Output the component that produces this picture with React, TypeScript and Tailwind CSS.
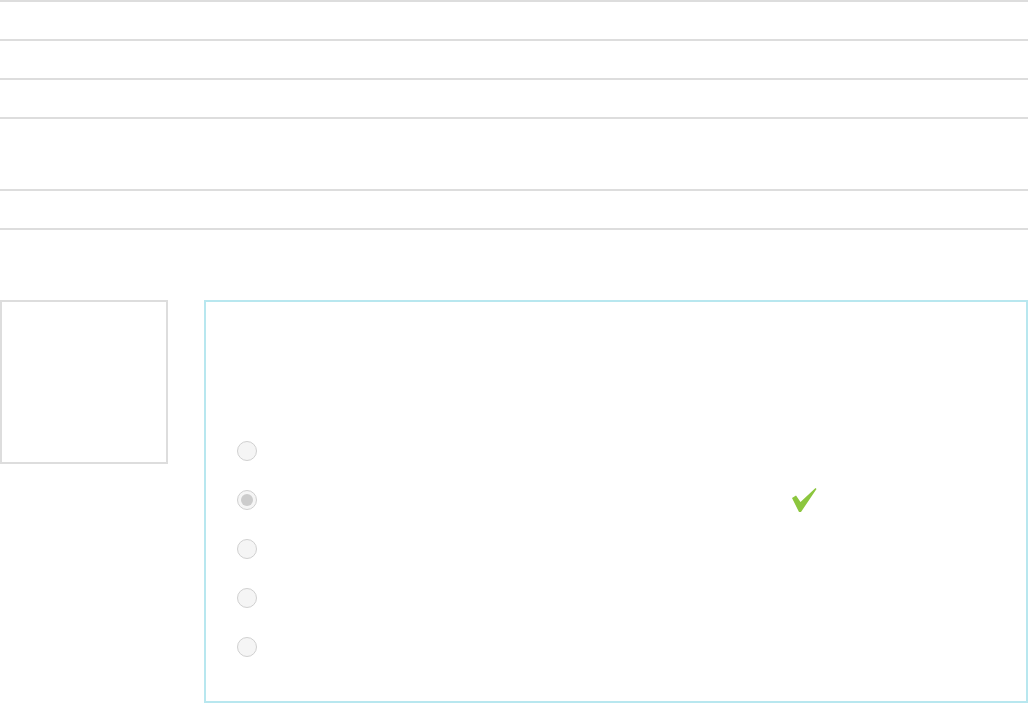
import React from 'react'

// heights include the 2px bottom border
const rows = [39, 39, 39, 72, 39]

const options = [
  { id: 1, checked: false, correct: false },
  { id: 2, checked: true, correct: true },
  { id: 3, checked: false, correct: false },
  { id: 4, checked: false, correct: false },
  { id: 5, checked: false, correct: false },
]

const Radio = ({ checked }: { checked: boolean }) => (
  <span className="flex items-center justify-center w-[20px] h-[20px] rounded-full border-[1.5px] border-[#d0d0d0] bg-[#f5f5f5] shrink-0">
    {checked && <span className="w-[12px] h-[12px] rounded-full bg-[#cccccc]" />}
  </span>
)

const Tick = () => (
  <svg width="25" height="25" viewBox="0 0 25 25" className="shrink-0">
    <polygon points="0,10 4,7.5 8.5,14 23.5,0 24.5,1 9,24 7,24" fill="#8cc63e" />
  </svg>
)

export default function App() {
  return (
    <div className="w-[1028px] h-[704px] bg-white overflow-hidden font-['Liberation_Sans',sans-serif]">
      {/* table rows */}
      <div className="border-t-2 border-[#dddddd]">
        {rows.map((h, i) => (
          <div key={i} className="border-b-2 border-[#dddddd]" style={{ height: h }} />
        ))}
      </div>

      <div className="flex gap-[36px] mt-[70px]">
        <div className="w-[168px] h-[164px] border-2 border-[#dddddd] shrink-0" />

        <div className="flex-1 h-[403px] border-2 border-[#b8e7ef] pt-[124px] pl-[31px]">
          {options.map((o) => (
            <div key={o.id} className="flex items-center h-[49px]">
              <Radio checked={o.checked} />
              {o.correct && (
                <div className="ml-[535px] mt-[2px]">
                  <Tick />
                </div>
              )}
            </div>
          ))}
        </div>
      </div>
    </div>
  )
}
